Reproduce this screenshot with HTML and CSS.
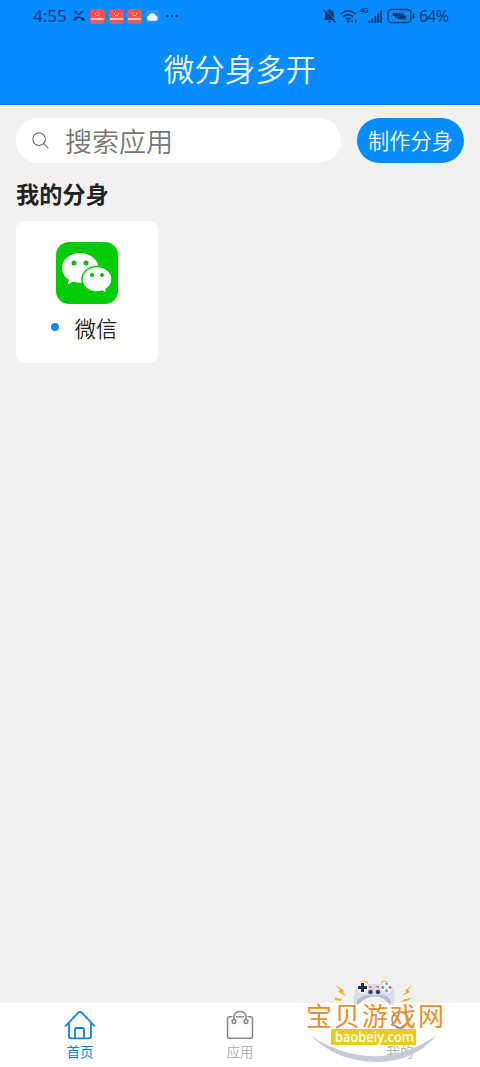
FILE: index.html
```
<!DOCTYPE html>
<html lang="zh-CN">
<head>
<meta charset="utf-8">
<title>微分身多开</title>
<link rel="stylesheet" href="styles.css">
</head>
<body>
<div class="app">
  <header class="header">
    <div class="status">
      <div class="status-left">
        <span class="clock">4:55</span>
        <svg class="missed" viewBox="0 0 15 14"><path d="M1 10.2C4 6.7 11 6.7 14 10.2L13 12.7L9.8 11.5V9.8Q7.5 9 5.2 9.8V11.5L2 12.7Z" fill="currentColor"/><path d="M3.2 5V2H6M3.5 2.3L7.3 5.7L12 1.5" fill="none" stroke="currentColor" stroke-width="1.2"/></svg>
        <span class="notice"></span><span class="notice"></span><span class="notice"></span>
        <svg class="weather" viewBox="0 0 14 14"><rect width="14" height="14" rx="3" fill="#2f94f0"/><path d="M3.7 11.5a2.8 2.8 0 0 1-.6-5.5 4 4 0 0 1 7.3-.2A3 3 0 0 1 10.6 11.5Z" fill="#f3f9ff"/></svg>
        <svg class="more" viewBox="0 0 14 4"><g fill="currentColor"><circle cx="2.5" cy="2" r="1.2"/><circle cx="7" cy="2" r="1.2"/><circle cx="11.5" cy="2" r="1.2"/></g></svg>
      </div>
      <div class="status-right">
        <svg class="bell" viewBox="0 0 14 16"><path d="M1.5 12L2.5 10V6.3Q3 2.5 6 2V1.2H8V2Q11.5 2.5 11.5 6.3V10L13 12ZM5 12.8H9Q8.5 14.6 7 14.6T5 12.8Z" fill="currentColor"/><path d="M2 1L13.8 13" stroke="#068cff" stroke-width="1"/><path d="M.7 1.6L13 14.5" stroke="currentColor" stroke-width="1.3"/></svg>
        <svg class="wifi" viewBox="0 0 17 15"><path d="M1 5Q8 -1.5 15.5 5M3.4 7.8Q8.2 3.5 13.1 7.8M5.8 10.3Q8.2 8 10.7 10.3" fill="none" stroke="currentColor" stroke-width="1.6"/><circle cx="8.2" cy="12.5" r="1.4" fill="currentColor"/><path d="M11 12.2l1.7-1.7v3.4zM16.8 12.2l-1.7-1.7v3.4z" fill="currentColor"/></svg>
        <span class="network">4G</span>
        <svg class="signal" viewBox="0 0 15 15"><path d="M1.5 14V11.5M4.4 14V9.5M7.3 14V7M10.2 14V4.5M13.1 14V1.5" stroke="currentColor" stroke-width="1.8"/></svg>
        <svg class="battery" viewBox="0 0 28 16"><rect x="1" y="1.5" width="23" height="13" rx="3.5" fill="none" stroke="currentColor" stroke-width="1.3"/><path d="M26.5 5.5V10.5" stroke="currentColor" stroke-width="1.6"/><path d="M4.5 4.5L8.5 5.5L9.5 4.3L11.5 6L12.5 4.3L14.5 6L15.7 4.3L17 7.5H20.8L18 9.2L20.5 12L15.8 10.8L14.8 12L12.8 10.5L11.8 12L9.5 9.5L8.5 11L7.8 8H4.5L7 6.8Z" fill="currentColor"/></svg>
        <span class="percent">64%</span>
      </div>
    </div>
    <h1 class="title">微分身多开</h1>
  </header>
  <main class="content">
    <div class="toolbar">
      <div class="search">
        <svg class="search-icon" viewBox="0 0 18 18"><circle cx="7.5" cy="7.5" r="6.7"/><path d="M12.4 12.4L17.3 17.3"/></svg>
        <span class="search-text">搜索应用</span>
      </div>
      <button class="create"><span class="create-text">制作分身</span></button>
    </div>
    <h2 class="section-title">我的分身</h2>
    <div class="card">
      <svg class="wechat" viewBox="0 0 62 62">
        <rect width="62" height="62" rx="13" fill="#00cc05"/>
        <path d="M24 11C14 11 6 17.5 6 26C6 31 9 35 13 37.7L11.5 42.5L17.3 39.5Q20.5 40.8 24 40.8C34.5 40.8 42.5 34.3 42.5 26S34 11 24 11Z" fill="#fff"/>
        <path d="M41 24.5C32.4 24.5 26 30.3 26 37.3S32.4 50 41 50Q44 50 46.3 49L51 51.5L49.9 47.3C53.8 45 56 41.6 56 37.3C56 30.3 49.6 24.5 41 24.5Z" fill="#fff" stroke="#00cc05" stroke-width="1.5"/>
        <g fill="#00bd05"><circle cx="18" cy="21" r="2.5"/><circle cx="30" cy="21" r="2.5"/><circle cx="36" cy="33" r="2"/><circle cx="46" cy="33" r="2"/></g>
      </svg>
      <div class="card-label"><span class="dot"></span><span>微信</span></div>
    </div>
  </main>
  <nav class="tabs">
    <div class="tab active">
      <svg class="tab-icon" viewBox="0 0 32 30"><path d="M1 16.5L14.3 2.7Q16 1 17.7 2.7L31 16.5M5 13V26Q5 28.3 7.3 28.3H24.7Q27 28.3 27 26V13M11 28V19.5Q11 18 12.5 18H18.5Q20 18 20 19.5V28"/></svg>
      <span>首页</span>
    </div>
    <div class="tab">
      <svg class="tab-icon" viewBox="0 0 32 30"><path d="M8.5 6.8H5.5Q3.5 6.8 3.5 8.8V26.3Q3.5 28.3 5.5 28.3H26.5Q28.5 28.3 28.5 26.3V8.8Q28.5 6.8 26.5 6.8H23.5M12 6.8H20M10 9.5V7.5Q10 1.5 16 1.5T22 7.5V9.5"/><circle cx="10" cy="11.5" r="1.9"/><circle cx="22" cy="11.5" r="1.9"/></svg>
      <span>应用</span>
    </div>
    <div class="tab">
      <svg class="tab-icon" viewBox="0 0 32 30"><circle cx="16" cy="9.7" r="8"/><path d="M3 29Q5 19 16 19T29 29"/></svg>
      <span>我的</span>
    </div>
  </nav>
  <svg class="watermark" viewBox="0 0 160 97">
    <path d="M16 66Q81 107 142 65Q119 92 82 92Q43 92 16 66Z" fill="#c7cad9"/>
    <path d="M66 14V12Q69 10.5 72 12V14M87 14V12Q90 10.5 93 12V14" fill="none" stroke="#edc64b" stroke-width="1.5"/>
    <path d="M62 14Q66 12 73 14H86Q93 12 97 15Q101 24 99 34Q96 37 92 31Q87 25 80 25T67 31Q62 37 59 35Q59 19 62 14Z" fill="#dadde8"/>
    <path d="M62 31Q66 25 75 25H84Q93 25 96 31L95 35L91 31Q87 26.5 80 26.5T67 31L62 35Z" fill="#b6bbcd"/>
    <circle cx="67.5" cy="17.5" r="6" fill="#eff2f8"/><circle cx="91.5" cy="17.5" r="6" fill="#f5f5fb"/>
    <path d="M67.5 13V22M63 17.5H72" stroke="#26314e" stroke-width="3"/>
    <circle cx="75.5" cy="22" r="2.3" fill="#3d4566"/><circle cx="83" cy="22" r="2.3" fill="#3d4566"/>
    <path d="M74 17H76.5M81.5 17H84" stroke="#df5366" stroke-width="1.5"/>
    <circle cx="91.5" cy="13.8" r="1.4" fill="#3dbec8"/><circle cx="91.5" cy="21" r="1.4" fill="#43a7d0"/><circle cx="87.8" cy="17.5" r="1.4" fill="#eb595d"/><circle cx="95" cy="17.5" r="1.4" fill="#eb595d"/>
    <path d="M41 15L49 20.5L48 22L51 26L43.5 22L45 20ZM40 27.5L47 29.5L46 31L40 30ZM117 15L110 20.5L111 22L107 26L115 22L113 20ZM117 28L110 29L105 32L112 31Z" fill="#f7ae25"/>
    <text class="brand" x="11" y="56" textLength="138">宝贝游戏网</text>
    <rect x="36" y="59" width="85" height="16" fill="#eacb22"/>
    <text class="domain" x="40" y="71.5" textLength="79" lengthAdjust="spacingAndGlyphs">baobeiy.com</text>
  </svg>
</div>
</body>
</html>
```
FILE: styles.css
```
* { box-sizing: border-box; }
body {
  margin: 0;
  font-family: "Noto Sans CJK SC", sans-serif;
  background: #f1f1f1;
}
svg { display: block; flex: none; }
.app {
  position: relative;
  display: flex;
  flex-direction: column;
  width: 480px;
  height: 1067px;
  overflow: hidden;
}
.header {
  height: 105px;
  background: #068cff;
  border-bottom: 1px solid #087ee0;
}
.status {
  display: flex;
  justify-content: space-between;
  height: 32px;
  padding: 0 31px 0 33px;
  color: #083b75;
}
.status-left, .status-right { display: flex; align-items: center; }
.clock { width: 35px; margin-right: 4px; font: 17px/32px "Noto Sans", sans-serif; }
.missed { width: 14px; height: 14px; margin-right: 4px; }
.notice {
  display: flex;
  align-items: center;
  justify-content: center;
  width: 15px;
  height: 15px;
  margin-right: 3.7px;
  border-radius: 3px;
  background: #f45459;
}
.notice::after {
  content: "";
  width: 13px;
  height: 5px;
  border-bottom: 2px solid #ffc1bd;
  background: radial-gradient(circle at 50% 0, transparent 2px, #ffaaa6 2px, #ffaaa6 3px, transparent 3px);
}
.weather { width: 13px; height: 13px; margin-right: 6px; }
.more { width: 14px; height: 4px; }
.bell { width: 15px; height: 16px; margin-right: 3px; }
.wifi { width: 17px; height: 15px; margin-right: 3px; }
.network { align-self: flex-start; width: 8px; padding-top: 7px; font: 700 7px/8px "Liberation Sans", sans-serif; letter-spacing: -.6px; }
.signal { width: 15px; height: 15px; margin-right: 4px; }
.battery { width: 28px; height: 16px; margin-right: 4px; }
.percent { width: 30px; font: 16px/32px "Noto Sans", sans-serif; letter-spacing: -.8px; }
.title {
  margin: 0;
  color: #f1fbff;
  font-size: 30.5px;
  font-weight: 350;
  line-height: 73px;
  text-align: center;
}
.content { flex: 1; padding: 13px 16px; }
.toolbar { display: flex; gap: 16px; height: 45px; }
.search {
  display: flex;
  align-items: center;
  width: 325px;
  padding-left: 16px;
  border-radius: 23px;
  background: #fff;
}
.search-icon { width: 17px; height: 17px; margin-right: 16px; fill: none; stroke: #656565; stroke-width: 1.1; }
.search-text { color: #777; font-size: 27px; font-weight: 350; line-height: 45px; }
.create {
  width: 107px;
  padding: 0;
  border: 0;
  border-radius: 23px;
  background: #068cff;
  color: #f1fbff;
  font: 350 21.2px/43px "Noto Sans CJK SC", sans-serif;
}
.create-text { display: block; padding-bottom: 2px; }
.section-title { margin: 13px 0 10px; color: #222; font-size: 23.2px; font-weight: 700; line-height: 35px; }
.card {
  display: flex;
  flex-direction: column;
  align-items: center;
  width: 142px;
  height: 142px;
  padding-top: 21px;
  border-radius: 8px;
  background: #fff;
}
.wechat { width: 62px; height: 62px; }
.card-label { display: flex; align-items: center; gap: 16px; margin-top: 8px; padding-right: 6px; color: #222; font-size: 21.3px; font-weight: 350; line-height: 31px; }
.dot { width: 8px; height: 8px; margin-bottom: 1px; border-radius: 50%; background: #168af0; }
.tabs { display: grid; grid-template-columns: repeat(3, 1fr); height: 64px; background: #fff; }
.tab { display: flex; flex-direction: column; align-items: center; padding-top: 7px; color: #b5b5b5; font-size: 13.5px; line-height: 20px; }
.tab-icon { width: 32px; height: 30px; margin-bottom: 1px; fill: none; stroke: #8c8c8c; stroke-width: 1.6; }
.active { color: #167cd0; }
.active .tab-icon { stroke: #1580d9; stroke-width: 1.8; }
.watermark { position: absolute; left: 295px; top: 970px; width: 160px; height: 97px; }
.brand { fill: #e4902d; font-size: 26px; font-weight: 400; }
.domain { fill: #fffce6; font: 600 15px "Open Sans", sans-serif; }
```
